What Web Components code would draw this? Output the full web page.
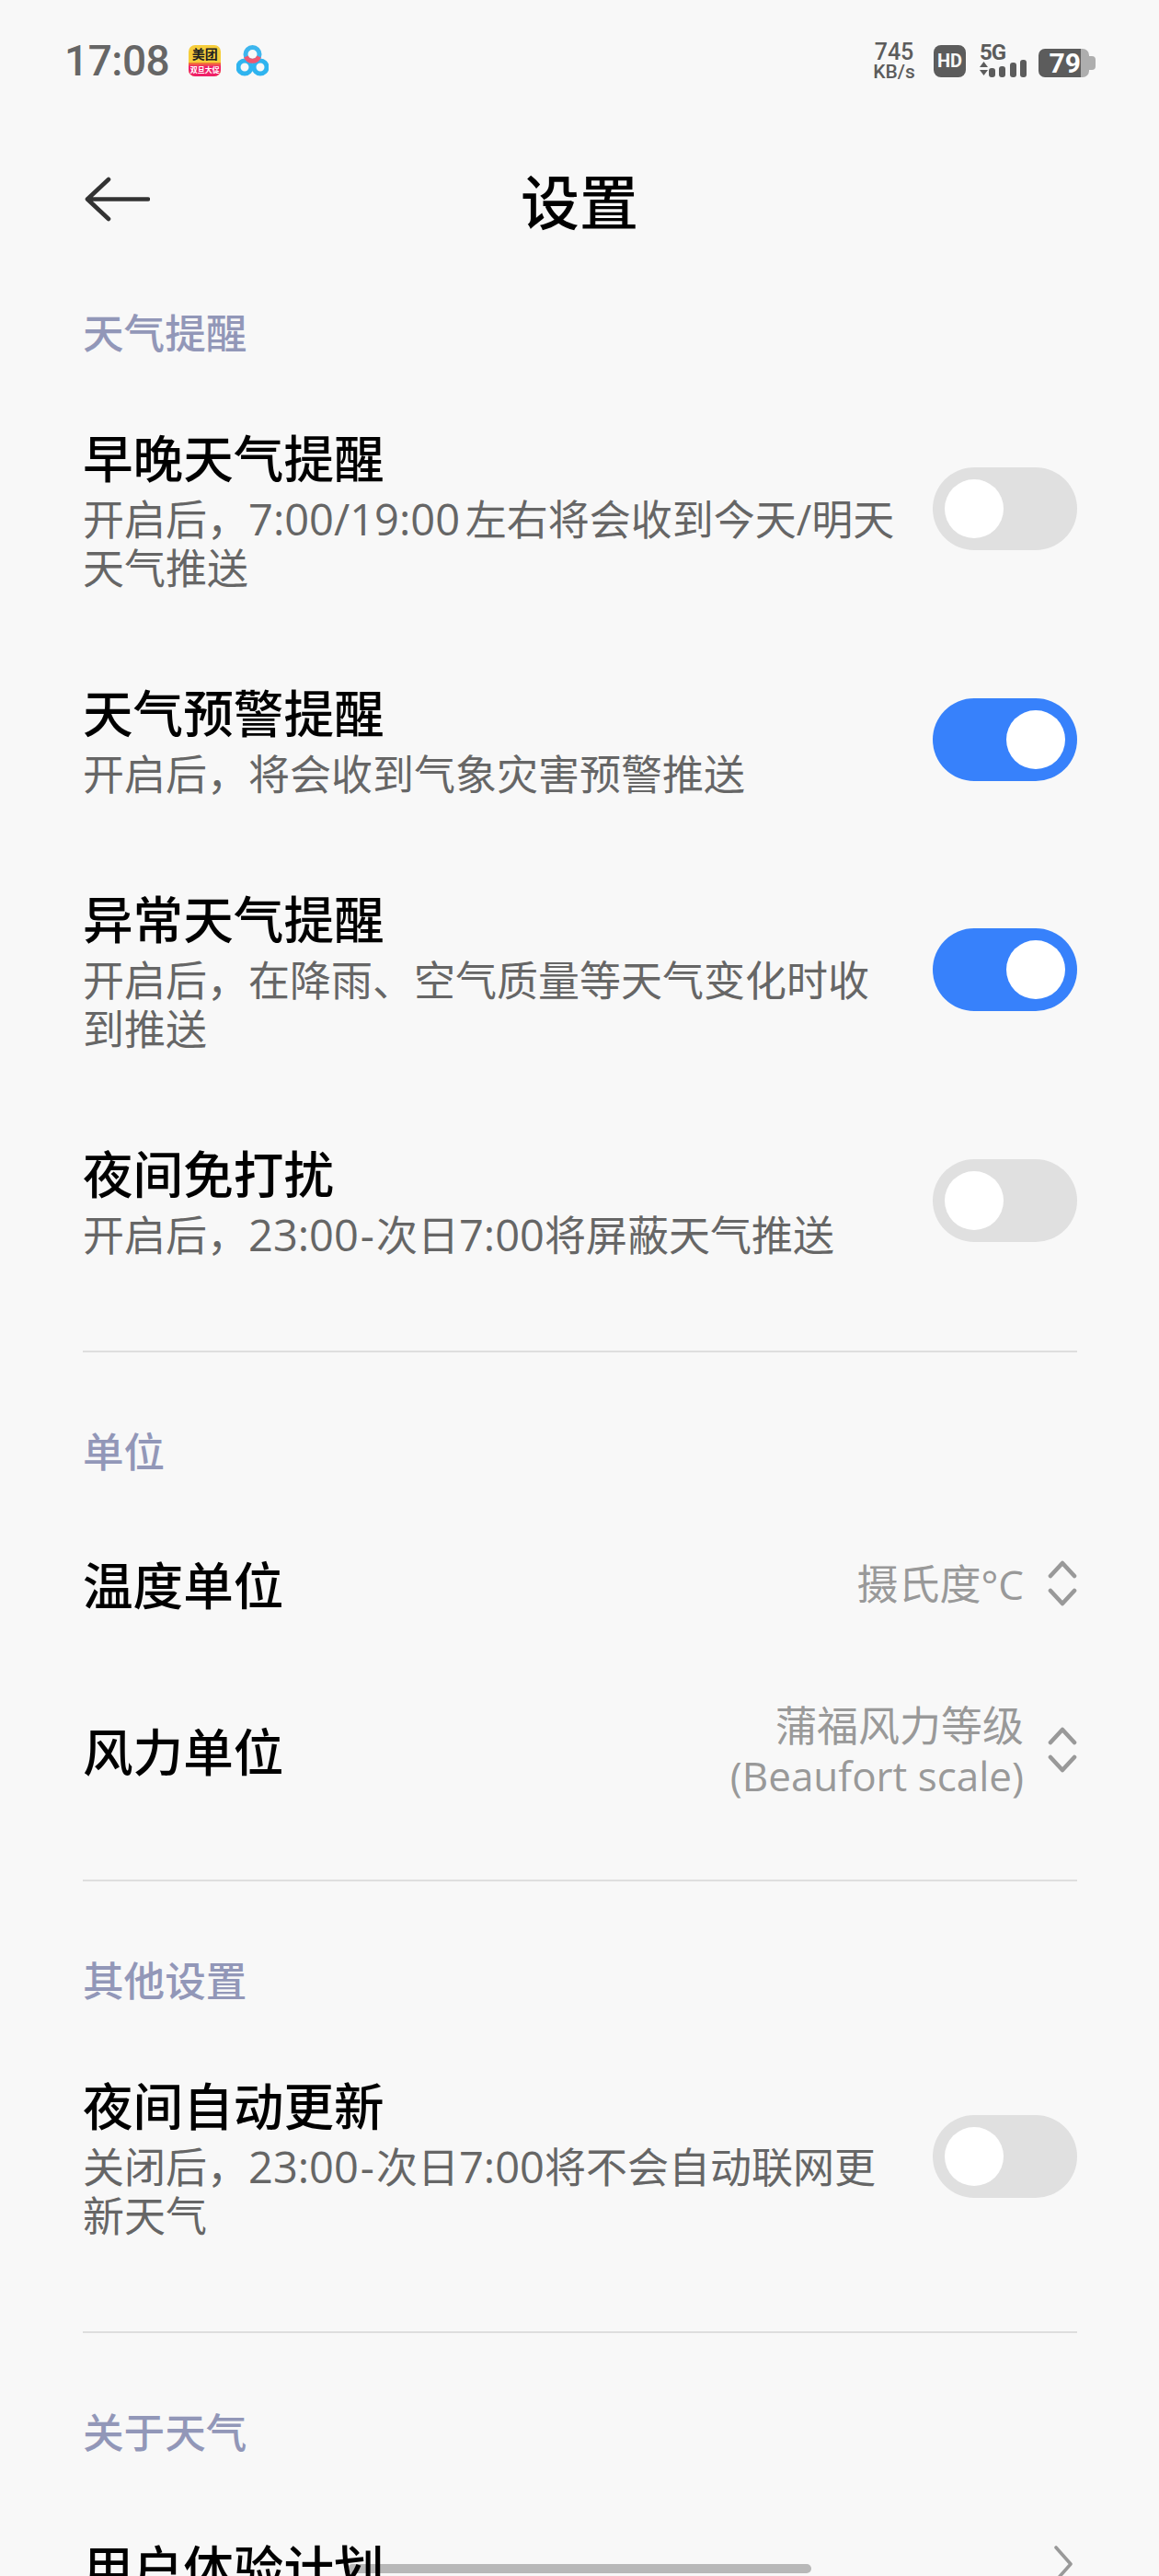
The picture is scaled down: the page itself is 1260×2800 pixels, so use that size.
<!DOCTYPE html>
<html lang="zh-CN">
<head>
<meta charset="utf-8">
<title>设置</title>
<style>
  html, body { margin: 0; background: #f8f8f8; }
  body { font-family: "Noto Sans CJK SC", sans-serif; height: 2800px; overflow: hidden; position: relative; }
</style>
</head>
<body>
<weather-settings></weather-settings>

<script>
const FONT = '"Open Sans", "Noto Sans CJK SC", sans-serif';

class StatusBar extends HTMLElement {
  constructor() {
    super();
    this.attachShadow({ mode: "open" });
  }
  connectedCallback() {
    this.shadowRoot.innerHTML = `
    <style>
      :host { display: flex; align-items: center; height: 132px; padding: 0 70px; color: #666; font-family: Roboto, sans-serif; box-sizing: border-box; }
      .time { font-size: 46px; font-weight: 500; line-height: 46px; letter-spacing: -0.5px; margin-right: 21px; }
      .left { display: flex; align-items: center; }
      .mt { width: 35px; height: 34px; margin-right: 17px; border-radius: 7px; overflow: hidden; display: flex; flex-direction: column; background: #f6cd3b; }
      .mt b { height: 19px; display: block; text-align: center; font: 700 14px/19px "Noto Sans CJK SC", sans-serif; color: #222; white-space: nowrap; }
      .mt i { flex: 1; display: block; text-align: center; font: normal 700 8px/15px "Noto Sans CJK SC", sans-serif; color: #fff; background: linear-gradient(#f38a2c, #ef1f67 30%); white-space: nowrap; }
      .right { margin-left: auto; display: flex; align-items: center; color: #5c5c5c; }
      .speed { width: 50px; text-align: center; font-weight: 500; margin-right: 18px; }
      .speed div:first-child { font-size: 25px; line-height: 23px; }
      .speed div:last-child { font-size: 21px; line-height: 20px; }
      .hd { width: 35px; height: 35px; border-radius: 8px; background: #5c5c5c; color: #f8f8f8; font: 700 20px/35px Roboto, sans-serif; text-align: center; margin-right: 15px; }
      .net { position: relative; width: 52px; height: 35px; margin-right: 12px; }
      .net span { position: absolute; left: 0; top: -4px; font-size: 24px; line-height: 24px; font-weight: 700; letter-spacing: -1px; }
      .net svg { position: absolute; left: 0; top: 0; }
      .batt { display: flex; align-items: stretch; height: 31px; margin-right: -1px; margin-top: 4px; }
      .batt .lvl { width: 46px; background: #5c5c5c; color: #fff; border-radius: 7px 0 0 7px; font: 700 30px/31px Roboto, sans-serif; text-align: right; box-sizing: border-box; }
      .batt .rest { width: 9px; background: #aeaeae; border-radius: 0 7px 7px 0; }
      .batt .nub { width: 7px; height: 15px; align-self: center; background: #aeaeae; border-radius: 0 4px 4px 0; }
    </style>
    <div class="left">
      <span class="time">17:08</span>
      <div class="mt"><b>美团</b><i>双旦大促</i></div>
      <svg width="35" height="34" viewBox="0 0 35 34" fill="none" stroke-width="5">
        <circle cx="9" cy="24" r="7" stroke="#2fb4ef"/>
        <circle cx="26" cy="24" r="7" stroke="#2fb4ef"/>
        <circle cx="17.5" cy="10" r="7.5" stroke="#3db6ee"/>
        <path d="M10.5 12.5 A7.5 7.5 0 0 0 24.5 12.5" stroke="#f0566f"/>
      </svg>
    </div>
    <div class="right">
      <div class="speed"><div>745</div><div>KB/s</div></div>
      <div class="hd">HD</div>
      <div class="net">
        <span>5G</span>
        <svg width="52" height="35" viewBox="0 0 52 35" fill="#5c5c5c">
          <path d="M4.5 18 L9 24 H0 Z"/>
          <path d="M0 27 H9 L4.5 33 Z"/>
          <rect x="10" y="25" width="7" height="10" rx="3"/>
          <rect x="21" y="23" width="7" height="12" rx="3"/>
          <rect x="33" y="19" width="7" height="16" rx="3"/>
          <rect x="44" y="16" width="7" height="19" rx="3"/>
        </svg>
      </div>
      <div class="batt"><div class="lvl">79</div><div class="rest"></div><div class="nub"></div></div>
    </div>`;
  }
}

class NavBar extends HTMLElement {
  constructor() {
    super();
    this.attachShadow({ mode: "open" });
  }
  connectedCallback() {
    this.shadowRoot.innerHTML = `
    <style>
      :host { display: grid; grid-template-columns: 1fr auto 1fr; align-items: center; box-sizing: border-box; height: 198px; padding: 0 91px 28px; font-family: "Noto Sans CJK SC", sans-serif; }
      h1 { margin: 0 0 3px; font-size: 64px; line-height: 80px; font-weight: 500; color: #000; }
      svg { margin-top: -1px; }
    </style>
    <svg width="72" height="52" viewBox="0 0 72 52" fill="none" stroke="#333" stroke-width="4.6" stroke-linecap="round" stroke-linejoin="round">
      <path d="M70 25.5 H4 M27 4 L4 25.5 L27 47"/>
    </svg>
    <h1><slot></slot></h1>`;
  }
}

class SectionLabel extends HTMLElement {
  constructor() {
    super();
    this.attachShadow({ mode: "open" });
  }
  connectedCallback() {
    this.shadowRoot.innerHTML = `
    <style>
      :host { display: block; padding: 0 90px; margin-bottom: 24.5px; font: 500 44.6px/60px "Noto Sans CJK SC", sans-serif; color: #9297b8; }
    </style>
    <slot></slot>`;
  }
}

class ToggleSwitch extends HTMLElement {
  constructor() {
    super();
    this.attachShadow({ mode: "open" });
  }
  connectedCallback() {
    this.shadowRoot.innerHTML = `
    <style>
      :host { display: flex; align-items: center; flex: none; box-sizing: border-box; width: 157px; height: 90px; padding: 0 13px; border-radius: 45px; background: #e0e0e0; }
      :host([on]) { background: #3781fb; justify-content: flex-end; }
      i { display: block; width: 64px; height: 64px; border-radius: 50%; background: #fff; }
    </style>
    <i></i>`;
  }
}

class SettingRow extends HTMLElement {
  constructor() {
    super();
    this.attachShadow({ mode: "open" });
  }
  connectedCallback() {
    this.shadowRoot.innerHTML = `
    <style>
      :host { display: flex; align-items: center; gap: 33px; padding: 47.5px 89px 47.5px 90px; }
      .text { flex: 1; min-width: 0; font-family: ${FONT}; }
      .title { font-size: 54.6px; line-height: 72px; font-weight: 500; color: #000; margin: -2px 0 6px; font-family: "Noto Sans CJK SC", sans-serif; }
      .sub { font-size: 45px; line-height: 53px; color: #666; word-spacing: -6px; }
    </style>
    <div class="text">
      <div class="title"><slot name="title"></slot></div>
      <div class="sub"><slot name="sub"></slot></div>
    </div>
    <slot></slot>`;
  }
}

class ValueRow extends HTMLElement {
  constructor() {
    super();
    this.attachShadow({ mode: "open" });
  }
  connectedCallback() {
    this.shadowRoot.innerHTML = `
    <style>
      :host { display: flex; align-items: center; box-sizing: border-box; min-height: 176px; padding: 35px 89px 35px 90px; }
      .title { flex: 1; font: 500 54.6px/72px "Noto Sans CJK SC", sans-serif; color: #000; white-space: nowrap; margin-bottom: 3px; }
      .value { font-family: ${FONT}; font-size: 45px; line-height: 54px; color: #999; text-align: right; margin-right: 26px; }
      svg { flex: none; margin-bottom: 3px; }
    </style>
    <div class="title"><slot name="title"></slot></div>
    <div class="value"><slot name="value"></slot></div>
    <svg width="32" height="52" viewBox="0 0 32 52" fill="none" stroke="#999" stroke-width="4.6" stroke-linecap="round" stroke-linejoin="round">
      <path d="M3 18 L16 4 L29 18 M3 34 L16 48 L29 34"/>
    </svg>`;
  }
}

class LinkRow extends HTMLElement {
  constructor() {
    super();
    this.attachShadow({ mode: "open" });
  }
  connectedCallback() {
    this.shadowRoot.innerHTML = `
    <style>
      :host { display: flex; align-items: center; justify-content: space-between; padding: 57.5px 93px 0 90px; }
      .title { font: 500 54.6px/72px "Noto Sans CJK SC", sans-serif; color: #000; }
      svg { margin-bottom: 6px; }
    </style>
    <div class="title"><slot></slot></div>
    <svg width="22" height="42" viewBox="0 0 22 42" fill="none" stroke="#999" stroke-width="3.6" stroke-linecap="round" stroke-linejoin="round">
      <path d="M3 3 L19 21 L3 39"/>
    </svg>`;
  }
}

class RowDivider extends HTMLElement {
  constructor() {
    super();
    this.attachShadow({ mode: "open" });
  }
  connectedCallback() {
    this.shadowRoot.innerHTML = `
    <style>
      :host { display: block; height: 2px; margin: 51px 89px 76px 90px; background: #dedede; }
    </style>`;
  }
}

class HomeIndicator extends HTMLElement {
  constructor() {
    super();
    this.attachShadow({ mode: "open" });
  }
  connectedCallback() {
    this.shadowRoot.innerHTML = `
    <style>
      :host { position: absolute; left: 378px; top: 2787px; width: 504px; height: 10px; border-radius: 5px; background: rgba(0, 0, 0, 0.26); }
    </style>`;
  }
}

class WeatherSettings extends HTMLElement {
  constructor() {
    super();
    this.attachShadow({ mode: "open" });
  }
  connectedCallback() {
    this.shadowRoot.innerHTML = `
    <style>
      :host { display: block; width: 1260px; }
      .units { display: flex; flex-direction: column; gap: 4px; padding-top: 4px; }
      .n { font-size: 47px; }
      .h { padding: 0 2px; }
      .v { font-size: 44px; }
    </style>
    <status-bar></status-bar>
    <nav-bar>设置</nav-bar>
    <section-label>天气提醒</section-label>
    <setting-row>
      <span slot="title">早晚天气提醒</span>
      <span slot="sub">开启后，<span class="n">7:00/19:00</span> 左右将会收到今天/明天天气推送</span>
      <toggle-switch></toggle-switch>
    </setting-row>
    <setting-row>
      <span slot="title">天气预警提醒</span>
      <span slot="sub">开启后，将会收到气象灾害预警推送</span>
      <toggle-switch on></toggle-switch>
    </setting-row>
    <setting-row>
      <span slot="title">异常天气提醒</span>
      <span slot="sub">开启后，在降雨、空气质量等天气变化时收到推送</span>
      <toggle-switch on></toggle-switch>
    </setting-row>
    <setting-row>
      <span slot="title">夜间免打扰</span>
      <span slot="sub">开启后，<span class="n">23:00<span class="h">-</span></span>次日<span class="n">7:00</span>将屏蔽天气推送</span>
      <toggle-switch></toggle-switch>
    </setting-row>
    <row-divider></row-divider>
    <section-label>单位</section-label>
    <div class="units">
      <value-row>
        <span slot="title">温度单位</span>
        <span slot="value">摄氏度<span class="v">°C</span></span>
      </value-row>
      <value-row>
        <span slot="title">风力单位</span>
        <span slot="value">蒲福风力等级<br><span class="v">(Beaufort scale)</span></span>
      </value-row>
    </div>
    <row-divider></row-divider>
    <section-label>其他设置</section-label>
    <setting-row>
      <span slot="title">夜间自动更新</span>
      <span slot="sub">关闭后，<span class="n">23:00<span class="h">-</span></span>次日<span class="n">7:00</span>将不会自动联网更新天气</span>
      <toggle-switch></toggle-switch>
    </setting-row>
    <row-divider></row-divider>
    <section-label>关于天气</section-label>
    <link-row>用户体验计划</link-row>
    <home-indicator></home-indicator>`;
  }
}

customElements.define("status-bar", StatusBar);
customElements.define("nav-bar", NavBar);
customElements.define("section-label", SectionLabel);
customElements.define("toggle-switch", ToggleSwitch);
customElements.define("setting-row", SettingRow);
customElements.define("value-row", ValueRow);
customElements.define("link-row", LinkRow);
customElements.define("row-divider", RowDivider);
customElements.define("home-indicator", HomeIndicator);
customElements.define("weather-settings", WeatherSettings);
</script>
</body>
</html>
